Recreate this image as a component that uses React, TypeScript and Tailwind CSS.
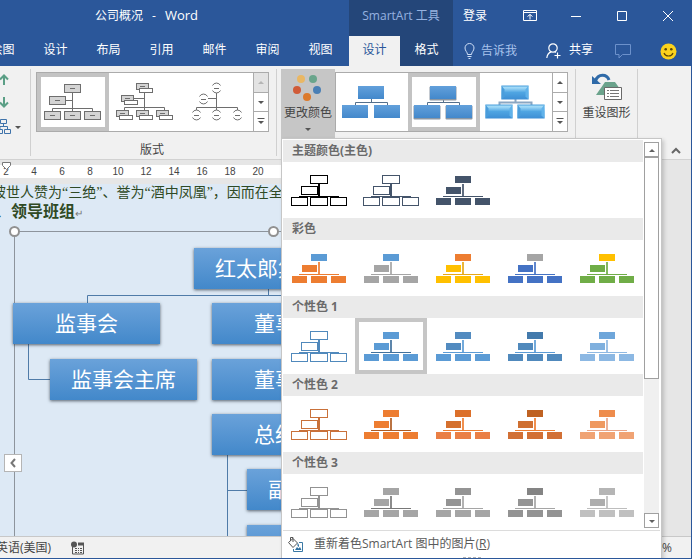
import React from "react";

type Scheme = { outline?: boolean; top: string; left: string; line: string; base: string; picked?: boolean };
type Section = { title: string; schemes: Scheme[] };

const outline = (c: string): Scheme => ({ outline: true, top: c, left: c, line: c, base: c });
const fill = (top: string, left: string, line: string, base: string, picked = false): Scheme => ({ top, left, line, base, picked });

const SECTIONS: Section[] = [
  { title: "主题颜色(主色)", schemes: [outline("#000000"), outline("#44546a"), fill("#44546a", "#44546a", "#44546a", "#44546a")] },
  {
    title: "彩色",
    schemes: [
      fill("#5b9bd5", "#ed7d31", "#ed7d31", "#ed7d31"),
      fill("#5b9bd5", "#a5a5a5", "#a5a5a5", "#a5a5a5"),
      fill("#ed7d31", "#ffc000", "#e6a817", "#ffc000"),
      fill("#a5a5a5", "#4472c4", "#4472c4", "#4472c4"),
      fill("#ffc000", "#70ad47", "#70ad47", "#70ad47"),
    ],
  },
  {
    title: "个性色 1",
    schemes: [
      outline("#5089bc"),
      fill("#5b9bd5", "#5b9bd5", "#41719c", "#5b9bd5", true),
      fill("#528bc0", "#528bc0", "#5b9bd5", "#5b9bd5"),
      fill("#437aac", "#5089bc", "#5b9bd5", "#5089bc"),
      fill("#6ea6da", "#7fb0de", "#8fb9e2", "#8cb8e3"),
    ],
  },
  {
    title: "个性色 2",
    schemes: [
      outline("#c9713a"),
      fill("#ed7d31", "#ed7d31", "#ae5a21", "#ed7d31"),
      fill("#dc702a", "#d5702e", "#ed7d31", "#ea7f45"),
      fill("#bf6222", "#cf6f31", "#ed7d31", "#d27035"),
      fill("#ee8c4c", "#ef9960", "#e9a487", "#f0a374"),
    ],
  },
  {
    title: "个性色 3",
    schemes: [
      outline("#929292"),
      fill("#a5a5a5", "#a5a5a5", "#787878", "#a5a5a5"),
      fill("#949494", "#949494", "#a5a5a5", "#a5a5a5"),
      fill("#848484", "#949494", "#a5a5a5", "#939393"),
      fill("#b5b5b5", "#adadad", "#bdbdbd", "#c0c0c0"),
    ],
  },
];

function SchemeThumb({ s }: { s: Scheme }) {
  if (s.outline) {
    const box = { fill: "#fff", stroke: s.top };
    return (
      <svg viewBox="0 0 72 56" className="h-14 w-[72px]" shapeRendering="crispEdges" aria-hidden="true">
        <rect x="35" y="22" width="2" height="14" fill={s.line} />
        <rect x="16" y="34" width="40" height="1" fill={s.line} />
        <rect x="27.5" y="13.5" width="17" height="8" {...box} />
        <rect x="18.5" y="24.5" width="16" height="8" {...box} />
        <rect x="8.5" y="35.5" width="16" height="8" {...box} />
        <rect x="27.5" y="35.5" width="17" height="8" {...box} />
        <rect x="47.5" y="35.5" width="16" height="8" {...box} />
      </svg>
    );
  }
  return (
    <svg viewBox="0 0 72 56" className="h-14 w-[72px]" shapeRendering="crispEdges" aria-hidden="true">
      <rect x="35" y="22" width="2" height="13" fill={s.line} opacity="0.85" />
      <rect x="16" y="34" width="40" height="1" fill={s.line} />
      <rect x="28" y="14" width="16" height="7" fill={s.top} />
      <rect x="19" y="25" width="15" height="7" fill={s.left} />
      <rect x="9" y="36" width="15" height="7" fill={s.base} />
      <rect x="28" y="36" width="16" height="7" fill={s.base} />
      <rect x="48" y="36" width="15" height="7" fill={s.base} />
    </svg>
  );
}

function Caret({ up = false, bar = false, color = "#555" }: { up?: boolean; bar?: boolean; color?: string }) {
  return (
    <svg viewBox="0 0 8 8" className="h-2 w-2" aria-hidden="true">
      {bar && <rect x="0.5" y="0" width="7" height="1" fill={color} />}
      <path d={up ? "M1 6h6L4 3z" : "M1 3h6L4 6z"} fill={color} />
    </svg>
  );
}

function GallerySpinner({ name, first }: { name: string; first?: boolean }) {
  return (
    <div className="flex w-[15px] flex-col divide-y divide-[#ababab] border-l border-[#ababab] bg-white">
      <button
        aria-label={name + "上一行"}
        disabled={first}
        className="flex flex-1 items-center justify-center disabled:bg-[#e3e3e3]"
      >
        <Caret up color={first ? "#b5b5b5" : "#555"} />
      </button>
      <button aria-label={name + "下一行"} className="flex flex-1 items-center justify-center">
        <Caret />
      </button>
      <button aria-label={name + "更多"} className="flex flex-1 items-center justify-center">
        <Caret bar />
      </button>
    </div>
  );
}

function GalleryItem({ label, picked, children, box }: { label: string; picked?: boolean; box: string; children: React.ReactNode }) {
  return (
    <button aria-label={label} aria-pressed={!!picked} className="relative h-full w-[72px]">
      {picked && <span className="absolute inset-0 border-4 border-[#c3c3c3]" />}
      <svg viewBox={box} className="h-full w-[72px]" aria-hidden="true">
        {children}
      </svg>
    </button>
  );
}

function LayoutGallery() {
  const grey = { fill: "#d4d4d4", stroke: "#6e6e6e" };
  const white = { fill: "#fff", stroke: "#6e6e6e" };
  const line = { fill: "none", stroke: "#6e6e6e" };
  const plain = [[64, 84], [49, 96], [44, 111], [64, 111], [84, 111]];
  const paired = [[136, 83], [121, 95], [116, 110], [136, 110], [156, 110]];
  const rings = [[216, 88], [203, 99], [196, 115], [216, 115], [237, 115]];
  return (
    <div className="flex h-[60px] border border-[#ababab] bg-white">
      <GalleryItem label="组织结构图" picked box="37 73 72 58">
        <path d="M72.5 93v18M66 100.500h6M52.500 111v-2.500h40v2.500" {...line} />
        {plain.map(([x, y]) => (
          <g key={x + "-" + y}>
            <rect x={x + 0.5} y={y + 0.5} width="16" height="8" {...grey} />
            <path d={`M${x + 6} ${y + 4.5}h5`} {...line} />
          </g>
        ))}
      </GalleryItem>
      <GalleryItem label="姓名和职务组织结构图" box="109 73 72 58">
        <path d="M144.500 93v17M134 98.500h10M124.500 110v-2.500h40v2.500" {...line} />
        {paired.map(([x, y]) => (
          <g key={x + "-" + y}>
            <rect x={x + 0.5} y={y + 0.5} width="12" height="6" {...grey} />
            <path d={`M${x + 4} ${y + 3.5}h5`} {...line} />
            <rect x={x + 3.5} y={y + 5.5} width="13" height="4" {...white} />
          </g>
        ))}
      </GalleryItem>
      <GalleryItem label="半圆组织结构图" box="181 73 72 58">
        <path d="M216.500 93v17M208 98.500h8M196.500 110v-2.500h41v2.500" {...line} />
        {rings.map(([x, y]) => (
          <g key={x + "-" + y}>
            <path
              d={`M${x - 3.5} ${y - 2.5}a4.500 4.500 0 0 1 8 0M${x - 3.5} ${y + 2.5}a4.500 4.500 0 0 0 8 0M${x - 2} ${y + 0.5}h5`}
              {...line}
            />
          </g>
        ))}
      </GalleryItem>
      <GallerySpinner name="版式" first />
    </div>
  );
}

function StyleGallery() {
  const line = { fill: "none", stroke: "#55708c" };
  const blocks = [[22, 13], [6, 32], [38, 32]];
  return (
    <div className="flex h-[60px] border border-[#ababab] bg-white">
      <svg className="absolute h-0 w-0" aria-hidden="true">
        <defs>
          <linearGradient id="blue" x1="0" y1="0" x2="0" y2="1">
            <stop offset="0" stopColor="#62a0db" />
            <stop offset="1" stopColor="#4388cb" />
          </linearGradient>
          <linearGradient id="gloss" x1="0" y1="0" x2="0" y2="1">
            <stop offset="0" stopColor="#4ba0dc" />
            <stop offset="0.15" stopColor="#a5dcf8" />
            <stop offset="0.5" stopColor="#4fa5e2" />
            <stop offset="1" stopColor="#3d8ed4" />
          </linearGradient>
        </defs>
      </svg>
      <GalleryItem label="简单填充" box="0 0 72 58">
        <path d="M35.500 26v4M19.500 32v-2.500h32v2.500" {...line} />
        {blocks.map(([x, y]) => (
          <rect key={x} x={x} y={y} width="26" height="13" fill="url(#blue)" />
        ))}
      </GalleryItem>
      <GalleryItem label="中等效果" picked box="0 0 72 58">
        <path d="M35.500 26v4M19.500 32v-2.500h32v2.500" {...line} />
        {blocks.map(([x, y]) => (
          <g key={x}>
            <rect x={x - 0.5} y={y + 0.5} width="27" height="14" rx="1" fill="#8a96a3" />
            <rect x={x} y={y} width="26" height="13" fill="url(#blue)" />
          </g>
        ))}
      </GalleryItem>
      <GalleryItem label="强烈效果" box="0 0 72 58">
        <path d="M35.500 26v4M19.500 32v-2.500h32v2.500" stroke="#8aa6c2" strokeWidth="2" fill="none" />
        {blocks.map(([x, y]) => (
          <g key={x}>
            <rect x={x - 0.5} y={y - 0.5} width="27" height="14" fill="url(#gloss)" />
            <path d={`M${x - 0.5} ${y + 13.5}v-14l3 4v7z`} fill="#4a9ddb" />
            <path d={`M${x + 26.5} ${y + 13.5}v-14l-3 4v7z`} fill="#60b2ea" />
          </g>
        ))}
      </GalleryItem>
      <GallerySpinner name="样式" />
    </div>
  );
}

function ColorMenu() {
  return (
    <div
      role="menu"
      aria-label="更改颜色"
      className="absolute left-0 top-full z-20 flex w-[381px] flex-col border border-[#c6c6c6] bg-white p-px shadow-[2px_2px_4px_rgba(0,0,0,0.18)]"
    >
      <div className="flex">
        <div className="w-[360px]">
          {SECTIONS.map((sec) => (
            <section key={sec.title} aria-label={sec.title}>
              <h3 className="h-[22px] bg-[#eaeaea] pl-[9px] text-xs leading-[22px] font-bold text-[#6a6a6a]">{sec.title}</h3>
              <div className="grid grid-cols-5">
                {sec.schemes.map((s, i) => (
                  <button key={i} role="menuitem" aria-label={sec.title + " 方案 " + (i + 1)} className="relative h-14 w-[72px]">
                    {s.picked && <span className="absolute inset-0 border-4 border-[#c6c6c6]" />}
                    <SchemeThumb s={s} />
                  </button>
                ))}
              </div>
            </section>
          ))}
        </div>
        <div className="my-0.5 ml-px flex w-[15px] flex-col bg-[#f0f0f0]">
          <button aria-label="向上滚动" className="flex h-[15px] items-center justify-center border border-[#a0a0a0] bg-white">
            <Caret up color="#606060" />
          </button>
          <div className="h-[222px] border border-[#a0a0a0] bg-white" />
          <button aria-label="向下滚动" className="mt-auto flex h-[15px] items-center justify-center border border-[#a0a0a0] bg-white">
            <Caret color="#606060" />
          </button>
        </div>
      </div>
      <button role="menuitem" className="flex h-[27px] items-center gap-2.5 border-t border-[#dcdcdc] pl-1 text-xs text-[#5a5a5a]">
        <svg viewBox="0 0 17 17" className="size-[17px]" fill="none" stroke="#555" aria-hidden="true">
          <path d="M1.500 6.500 6 2.500l4.500 4.500-4.500 4.500zM3.500 5V1.500h2.500V6" />
          <path d="M10.500 7c1.500 1 1.500 2 1.500 4l-1.500-1z" fill="#2f6f9f" stroke="none" />
          <path d="M12 6.500h3.500v9H6.500V13" stroke="#3b79a5" />
          <path d="m8 14 2-3 1.500 1.500L13 11l1.500 3z" fill="#2f6f9f" stroke="none" />
        </svg>
        <span>
          重新着色SmartArt 图中的图片(<u>R</u>)
        </span>
      </button>
      <div className="flex h-2 justify-center gap-0.5">
        {[0, 1, 2, 3].map((i) => (
          <span key={i} className="size-[3px] bg-[#b5b5b5]" />
        ))}
      </div>
    </div>
  );
}

function TitleBar() {
  const win = "flex w-[46px] items-center justify-center";
  return (
    <header className="flex h-9 text-xs text-white">
      <h1 className="flex w-[349px] items-center gap-[9px] pb-1 pl-[95px]">
        <span>公司概况</span>
        <span>-</span>
        <span className="text-[13px]">Word</span>
      </h1>
      <div className="flex w-[104px] items-center justify-center bg-[#244679] pb-1 text-[#96b2e0]">SmartArt 工具</div>
      <button className="px-2.5 pb-1">登录</button>
      <div className="ml-auto flex pb-1">
        <button aria-label="功能区显示选项" className={win}>
          <svg viewBox="0 0 14 12" className="h-3 w-3.5" fill="none" stroke="#fff" aria-hidden="true">
            <path d="M.5.5h13v10H.5zM.5 2.500h13M7 9.500v-5M4.500 6.500 7 4.500l2.500 2" />
          </svg>
        </button>
        <button aria-label="最小化" className={win}>
          <svg viewBox="0 0 10 10" className="size-2.5" stroke="#fff" aria-hidden="true">
            <path d="M0 5.500h10" />
          </svg>
        </button>
        <button aria-label="最大化" className={win}>
          <svg viewBox="0 0 10 10" className="size-2.5" fill="none" stroke="#fff" aria-hidden="true">
            <path d="M.5.5h9v9h-9z" />
          </svg>
        </button>
        <button aria-label="关闭" className={win}>
          <svg viewBox="0 0 10 10" className="size-2.5" stroke="#fff" aria-hidden="true">
            <path d="m0 0 10 10M10 0 0 10" />
          </svg>
        </button>
      </div>
    </header>
  );
}

function TabRow() {
  return (
    <div className="flex h-[30px] text-xs text-white">
      <nav className="-ml-6 flex" aria-label="功能区选项卡">
        {["绘图", "设计", "布局", "引用", "邮件", "审阅", "视图"].map((t) => (
          <button key={t} className="w-[53px] pb-0.5">
            {t}
          </button>
        ))}
        <button aria-current="page" className="ml-0.5 w-[51px] bg-[#f1f1f1] pb-0.5 text-[#2b579a]">
          设计
        </button>
        <button className="w-[53px] bg-[#244679] pb-0.5">格式</button>
      </nav>
      <label className="ml-[11px] flex items-center gap-1.5 text-[#a9c3ec]">
        <svg viewBox="0 0 11 16" className="h-4 w-[11px]" fill="none" stroke="#cfdff7" aria-hidden="true">
          <path d="M3.500 11.500C3.500 9 1 8 1 5a4.500 4.500 0 0 1 9 0c0 3-2.500 4-2.500 6.500zM3.500 13.500h4M4.500 15.500h2" />
        </svg>
        <input aria-label="告诉我" placeholder="告诉我" className="w-12 bg-transparent placeholder:text-[#a9c3ec]" />
      </label>
      <div className="mr-3.5 ml-auto flex items-center">
        <button className="flex items-center gap-2">
          <svg viewBox="0 0 15 16" className="h-4 w-[15px]" fill="none" stroke="#fff" strokeWidth="1.2" aria-hidden="true">
            <circle cx="7" cy="5" r="4.200" />
            <path d="M.8 15c.4-3.500 2-5.500 4.500-6.200M8.800 8.800l1 .7M11.500 9.500v6M8.500 12.500h6" />
          </svg>
          <span className="pb-0.5">共享</span>
        </button>
        <button aria-label="批注" className="ml-[22px]">
          <svg viewBox="0 0 17 15" className="h-[15px] w-[17px]" fill="none" stroke="#6c91cb" aria-hidden="true">
            <path d="M.5.5h15v10H7.500l-3.500 3.500v-3.500H.5z" />
          </svg>
        </button>
        <button aria-label="反馈" className="ml-7">
          <svg viewBox="0 0 17 17" className="size-[17px]" aria-hidden="true">
            <circle cx="8.500" cy="8.500" r="8" fill="#fbd21c" />
            <circle cx="5.700" cy="6.200" r="1.300" fill="#5c4505" />
            <circle cx="11.300" cy="6.200" r="1.300" fill="#5c4505" />
            <path d="M4 10c1.500 4 7.500 4 9 0" fill="none" stroke="#5c4505" strokeWidth="1.200" />
          </svg>
        </button>
      </div>
    </div>
  );
}

function Ribbon() {
  return (
    <div className="flex h-[94px] border-b border-[#d2d2d2] bg-[#f1f1f1] text-xs text-[#444]">
      <div className="my-[3px] flex w-[31px] shrink-0 flex-col gap-[9px] border-r border-[#d0d0d0] pt-1">
        <button aria-label="上移">
          <svg viewBox="0 0 10 14" className="h-3.5 w-2.5" fill="none" stroke="#5b9f86" strokeWidth="2" aria-hidden="true">
            <path d="M4 12V3M0 6.500 4 2.500l4 4" />
          </svg>
        </button>
        <button aria-label="下移">
          <svg viewBox="0 0 10 14" className="h-3.5 w-2.5" fill="none" stroke="#5b9f86" strokeWidth="2" aria-hidden="true">
            <path d="M4 1v9M0 6.500l4 4 4-4" />
          </svg>
        </button>
        <button aria-label="组织结构图布局" className="flex items-center gap-[3px]">
          <svg viewBox="0 0 11 15" className="h-[15px] w-[11px]" fill="none" stroke="#3f73aa" aria-hidden="true">
            <path d="M.5.5h6v4h-6zM-3.500 10.500h6v4h-6zM4.500 10.500h6v4h-6zM3.500 5v3M0 10V7.500h7.500v3" />
          </svg>
          <Caret />
        </button>
      </div>
      <div className="my-[3px] flex w-[246px] shrink-0 flex-col items-center border-r border-[#d0d0d0] pt-[3px] pr-[3px]">
        <LayoutGallery />
        <span className="mt-2.5">版式</span>
      </div>
      <div className="relative my-[3px] ml-1 flex h-[69px] shrink-0">
        <button aria-expanded="true" className="flex w-[54px] flex-col items-center bg-[#c6c6c6]">
          <svg viewBox="0 0 30 32" className="h-8 w-[30px]" aria-hidden="true">
            <circle cx="8" cy="10" r="4" fill="#e9b764" />
            <circle cx="20" cy="10" r="4" fill="#6aa58c" />
            <circle cx="4" cy="21" r="4" fill="#d05b38" />
            <circle cx="24" cy="21" r="4" fill="#4a7fb5" />
            <circle cx="14" cy="28" r="4" fill="#dc7a2c" />
          </svg>
          <span className="mt-1 whitespace-nowrap">更改颜色</span>
          <span className="pt-1">
            <Caret />
          </span>
        </button>
        <ColorMenu />
      </div>
      <div className="my-[3px] flex w-[241px] shrink-0 items-start border-r border-[#d0d0d0] pt-[3px]">
        <StyleGallery />
      </div>
      <div className="my-[3px] flex w-[62px] shrink-0 border-r border-[#d0d0d0]">
        <button className="flex flex-1 flex-col items-center pt-1">
          <svg viewBox="0 0 30 28" className="h-7 w-[30px]" aria-hidden="true">
            <path d="M13 9h10l5 7-3 6H4z" fill="#6ba38c" />
            <path d="M17 7C15 1 6 0 3.500 8" fill="none" stroke="#2f6aa8" strokeWidth="3" />
            <path d="M0 3v8h9z" fill="#2f6aa8" />
            <path d="M12.500 14.500h17v12h-17z" fill="#fff" stroke="#6a6a6a" />
            <path d="M15 17.500h2m1 0h9M15 20.500h2m1 0h9M15 23.500h2m1 0h9" stroke="#777" />
          </svg>
          <span className="mt-1 whitespace-nowrap">重设图形</span>
        </button>
      </div>
      <button aria-label="折叠功能区" className="mr-2.5 mb-1 ml-auto self-end">
        <svg viewBox="0 0 10 8" className="h-2 w-2.5" fill="none" stroke="#666" strokeWidth="2" aria-hidden="true">
          <path d="m1 6 4-4 4 4" />
        </svg>
      </button>
    </div>
  );
}

const NODES = [
  { id: "root", t: "红太郎集团", c: "left-[194px] top-16" },
  { id: "supervisors", t: "监事会", c: "left-[13px] top-[119px]" },
  { id: "board", t: "董事会", c: "left-[212px] top-[119px]" },
  { id: "supervisor-chair", t: "监事会主席", c: "left-[50px] top-[175px]" },
  { id: "board-chair", t: "董事长", c: "left-[212px] top-[175px]" },
  { id: "manager", t: "总经理", c: "left-[212px] top-[230px]" },
  { id: "deputy-1", t: "副总经理一", c: "left-[247px] top-[285px]" },
  { id: "deputy-2", t: "", c: "left-[247px] top-[341px]" },
];

function DocumentArea() {
  return (
    <main className="flex min-h-0 flex-1 flex-col bg-[#e6e6e6]">
      <div className="relative flex h-6 items-start pt-[5px]">
        <div className="flex h-[13px] w-[340px] overflow-hidden bg-white font-['Liberation_Sans',sans-serif] text-[10px] leading-[14px] text-[#444]">
          <div className="-ml-2 flex">
            {[2, 4, 6, 8, 10, 12, 14, 16, 18, 20].map((n) => (
              <span key={n} className="w-7 text-center">
                {n}
              </span>
            ))}
          </div>
        </div>
        <svg viewBox="0 0 10 9" className="absolute left-0.5 top-0.5 h-[9px] w-2.5" fill="#fff" stroke="#777" aria-hidden="true">
          <path d="M.5.5h8v3l-4 4-4-4z" />
        </svg>
      </div>
      <div className="relative min-h-0 w-[340px] flex-1 overflow-hidden bg-[#dde9f5] text-[#2f4a24]">
        <p className="-ml-2 font-['Liberation_Serif','Noto_Sans_CJK_SC',sans-serif] text-sm leading-[18px] whitespace-nowrap">
          被世人赞为“三绝”、誉为“酒中凤凰”，因而在全
        </p>
        <h2 className="-ml-[5px] text-base leading-[18px] font-bold whitespace-nowrap">
          、领导班组<span className="text-[10px] font-normal text-[#777]">↵</span>
        </h2>
        <div className="absolute top-[47px] bottom-0 left-3.5 w-[520px] border-t border-l border-[#8d949c]" />
        <svg className="absolute inset-0 h-full w-full" fill="none" stroke="#4f7ba8" aria-hidden="true">
          <path d="M268.500 104v7.500M87.500 119v-7.500H340M28.500 159v36.500H50M227.500 270v100M227.500 306.500H249" />
        </svg>
        {NODES.map((n) => (
          <div
            key={n.id}
            className={
              "absolute flex h-[41px] w-[147px] items-center justify-center bg-linear-to-b from-[#6aa2da] to-[#4288ca] text-[21px] whitespace-nowrap text-white shadow-[0_1px_3px_rgba(40,50,60,0.75)] " +
              n.c
            }
          >
            {n.t}
          </div>
        ))}
        <span className="absolute top-[42px] left-[9px] size-[11px] rounded-full border-2 border-[#919191] bg-white" />
        <span className="absolute top-[42px] left-[268px] size-[11px] rounded-full border-2 border-[#919191] bg-white" />
        <button
          aria-label="展开文本窗格"
          className="absolute top-[270px] left-1 flex size-[18px] items-center justify-center border border-[#b5b5b5] bg-white"
        >
          <svg viewBox="0 0 6 10" className="h-2.5 w-1.5" fill="none" stroke="#777" strokeWidth="2" aria-hidden="true">
            <path d="M5 1 1.500 5 5 9" />
          </svg>
        </button>
      </div>
    </main>
  );
}

export default function App() {
  return (
    <div className="flex h-screen flex-col overflow-hidden border-r border-b border-[#2b579a] bg-[#2b579a] font-['Open_Sans','Noto_Sans_CJK_SC',sans-serif]">
      <TitleBar />
      <TabRow />
      <Ribbon />
      <DocumentArea />
      <footer className="flex h-[22px] items-center border-t border-[#c8c8c8] bg-[#f1f1f1] text-xs text-[#444]">
        <span className="-ml-1 whitespace-nowrap">英语(美国)</span>
        <button aria-label="宏录制" className="ml-5">
          <svg viewBox="0 0 14 14" className="size-3.5" aria-hidden="true">
            <path d="M1.500 6v7h11V2.500H7" fill="none" stroke="#555" />
            <path d="M7 1.500h6v3H7z" fill="#555" />
            <circle cx="3" cy="3.500" r="3" fill="#555" />
            <path d="M4 7.500h2m1 0h1m1 0h2M4 9.500h2m1 0h1m1 0h2M4 11.500h2m1 0h1m1 0h2" stroke="#555" />
          </svg>
        </button>
        <span className="mr-[19px] ml-auto">100%</span>
      </footer>
    </div>
  );
}
